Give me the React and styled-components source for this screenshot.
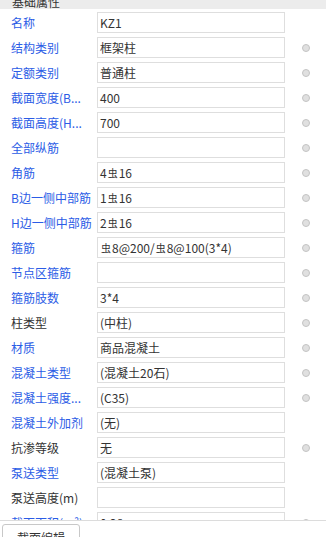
import React from 'react';
import styled, { createGlobalStyle } from 'styled-components';

const Global = createGlobalStyle`
  html, body { margin: 0; padding: 0; background: #fff; }
  body {
    font-family: "Noto Sans CJK SC", "Microsoft YaHei", "Liberation Sans", sans-serif;
    font-size: 12px;
    color: #333;
  }
`;

const Panel = styled.div`
  width: 326px;
  height: 537px;
  display: flex;
  flex-direction: column;
  overflow: hidden;
  background: #fff;
`;

const Header = styled.div`
  flex: none;
  height: 9px;
  background: #ececec;
  display: flex;
  align-items: flex-end;
  padding-left: 12px;
  overflow: hidden;
`;

const HeaderTitle = styled.span`
  font-size: 12px;
  line-height: 12px;
  color: #333;
  margin-bottom: 1px;
  white-space: nowrap;
`;

const Body = styled.div`
  flex: 1;
  min-height: 0;
  overflow: hidden;
  padding-top: 1px;
`;

const Row = styled.div`
  height: 25px;
  display: flex;
  align-items: center;
`;

const Label = styled.div`
  flex: none;
  box-sizing: border-box;
  width: 97px;
  padding-left: 11px;
  color: ${(p) => (p.$plain ? '#333' : '#2b5ce6')};
  white-space: nowrap;
  overflow: hidden;
  line-height: 17px;
`;

const Field = styled.div`
  flex: none;
  box-sizing: border-box;
  width: 188px;
  height: 21px;
  border: 1px solid #dedede;
  padding-left: 2px;
  display: flex;
  align-items: center;
  white-space: nowrap;
  overflow: hidden;
  color: #333;
`;

const Steel = styled.span`
  font-size: 10px;
  margin: 0 1px;
`;

const Radio = styled.span`
  flex: none;
  width: 8px;
  height: 8px;
  box-sizing: border-box;
  border-radius: 50%;
  border: 1px solid #c4c4c4;
  background: #e0e0e0;
  margin-left: 17px;
`;

const Footer = styled.div`
  flex: none;
  height: 17px;
  box-sizing: border-box;
  border-top: 1px solid #dcdcdc;
  padding: 3px 0 0 2px;
  overflow: hidden;
`;

const Button = styled.button`
  display: block;
  width: 78px;
  height: 24px;
  box-sizing: border-box;
  border: 1px solid #c8c8c8;
  border-radius: 3px;
  background: #fff;
  padding: 2px 14px 0;
  font-family: inherit;
  font-size: 12px;
  line-height: 17px;
  color: #333;
  text-align: left;
  white-space: nowrap;
`;

const S = () => <Steel>虫</Steel>;

const rows = [
  { label: '名称', value: 'KZ1', radio: false },
  { label: '结构类别', value: '框架柱', radio: true },
  { label: '定额类别', value: '普通柱', radio: true },
  { label: '截面宽度(B...', value: '400', radio: true },
  { label: '截面高度(H...', value: '700', radio: true },
  { label: '全部纵筋', value: '', radio: true },
  { label: '角筋', value: <>4<S />16</>, radio: true },
  { label: 'B边一侧中部筋', value: <>1<S />16</>, radio: true },
  { label: 'H边一侧中部筋', value: <>2<S />16</>, radio: true },
  { label: '箍筋', value: <><S />8@200/<S />8@100(3*4)</>, radio: true },
  { label: '节点区箍筋', value: '', radio: true },
  { label: '箍筋肢数', value: '3*4', radio: true },
  { label: '柱类型', value: '(中柱)', radio: true, plain: true },
  { label: '材质', value: '商品混凝土', radio: true },
  { label: '混凝土类型', value: '(混凝土20石)', radio: true },
  { label: '混凝土强度...', value: '(C35)', radio: true },
  { label: '混凝土外加剂', value: '(无)', radio: false },
  { label: '抗渗等级', value: '无', radio: true, plain: true },
  { label: '泵送类型', value: '(混凝土泵)', radio: false },
  { label: '泵送高度(m)', value: '', radio: false, plain: true },
  { label: '截面面积(m²)', value: '0.28', radio: true },
];

export default function App() {
  return (
    <>
      <Global />
      <Panel>
        <Header>
          <HeaderTitle>基础属性</HeaderTitle>
        </Header>
        <Body>
          {rows.map((r, i) => (
            <Row key={i}>
              <Label $plain={r.plain}>{r.label}</Label>
              <Field>{r.value}</Field>
              {r.radio && <Radio />}
            </Row>
          ))}
        </Body>
        <Footer>
          <Button type="button">截面编辑</Button>
        </Footer>
      </Panel>
    </>
  );
}
